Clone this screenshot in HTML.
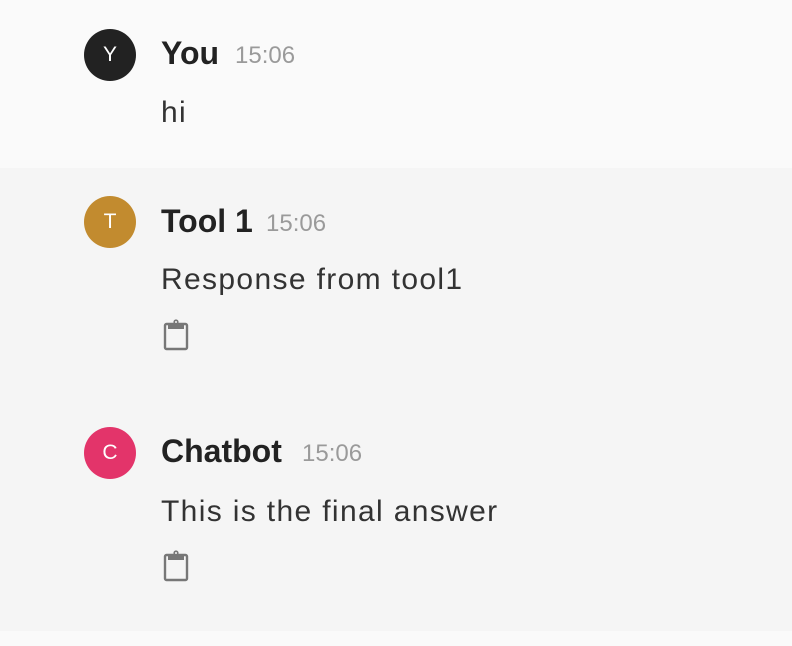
<!DOCTYPE html>
<html><head><meta charset="utf-8"><style>
html,body{margin:0;padding:0;width:792px;height:646px;overflow:hidden;background:#fafafa;font-family:"Liberation Sans",sans-serif;}
.band{position:absolute;left:0;width:792px;top:168px;height:463px;background:#f5f5f5;}
.av{position:absolute;left:84px;width:52px;height:52px;border-radius:50%;color:#fff;font-size:21px;line-height:52px;text-align:center;}
.n{position:absolute;left:161px;font-size:32px;line-height:32px;font-weight:bold;color:#222;white-space:nowrap;}
.t{position:absolute;font-size:24px;line-height:24px;color:#9a9a9a;white-space:nowrap;}
.b{position:absolute;left:161px;font-size:30px;line-height:30px;color:#333;white-space:nowrap;letter-spacing:1.35px;}
svg{position:absolute;left:160px;}
</style></head><body>
<div class="band"></div>
<div class="av" style="top:29px;background:#222">Y</div>
<div class="n" style="top:37px">You</div>
<div class="t" style="top:44px;left:235px">15:06</div>
<div class="b" style="top:98px">hi</div>

<div class="av" style="top:196px;background:#c28b2f">T</div>
<div class="n" style="top:205px">Tool 1</div>
<div class="t" style="top:212px;left:266px">15:06</div>
<div class="b" style="top:265px">Response from tool1</div>
<svg style="top:317px" width="32" height="36" viewBox="0 0 32 36"><rect x="5" y="7" width="22" height="25" rx="1.5" fill="none" stroke="#777" stroke-width="2.4"/><rect x="8" y="6" width="16" height="6" fill="#777"/><circle cx="16" cy="5" r="2.6" fill="#777"/><circle cx="16" cy="5" r="1" fill="#f5f5f5"/></svg>

<div class="av" style="top:427px;background:#e3346a">C</div>
<div class="n" style="top:435px">Chatbot</div>
<div class="t" style="top:442px;left:302px">15:06</div>
<div class="b" style="top:497px">This is the final answer</div>
<svg style="top:548px" width="32" height="36" viewBox="0 0 32 36"><rect x="5" y="7" width="22" height="25" rx="1.5" fill="none" stroke="#777" stroke-width="2.4"/><rect x="8" y="6" width="16" height="6" fill="#777"/><circle cx="16" cy="5" r="2.6" fill="#777"/><circle cx="16" cy="5" r="1" fill="#f5f5f5"/></svg>
</body></html>
